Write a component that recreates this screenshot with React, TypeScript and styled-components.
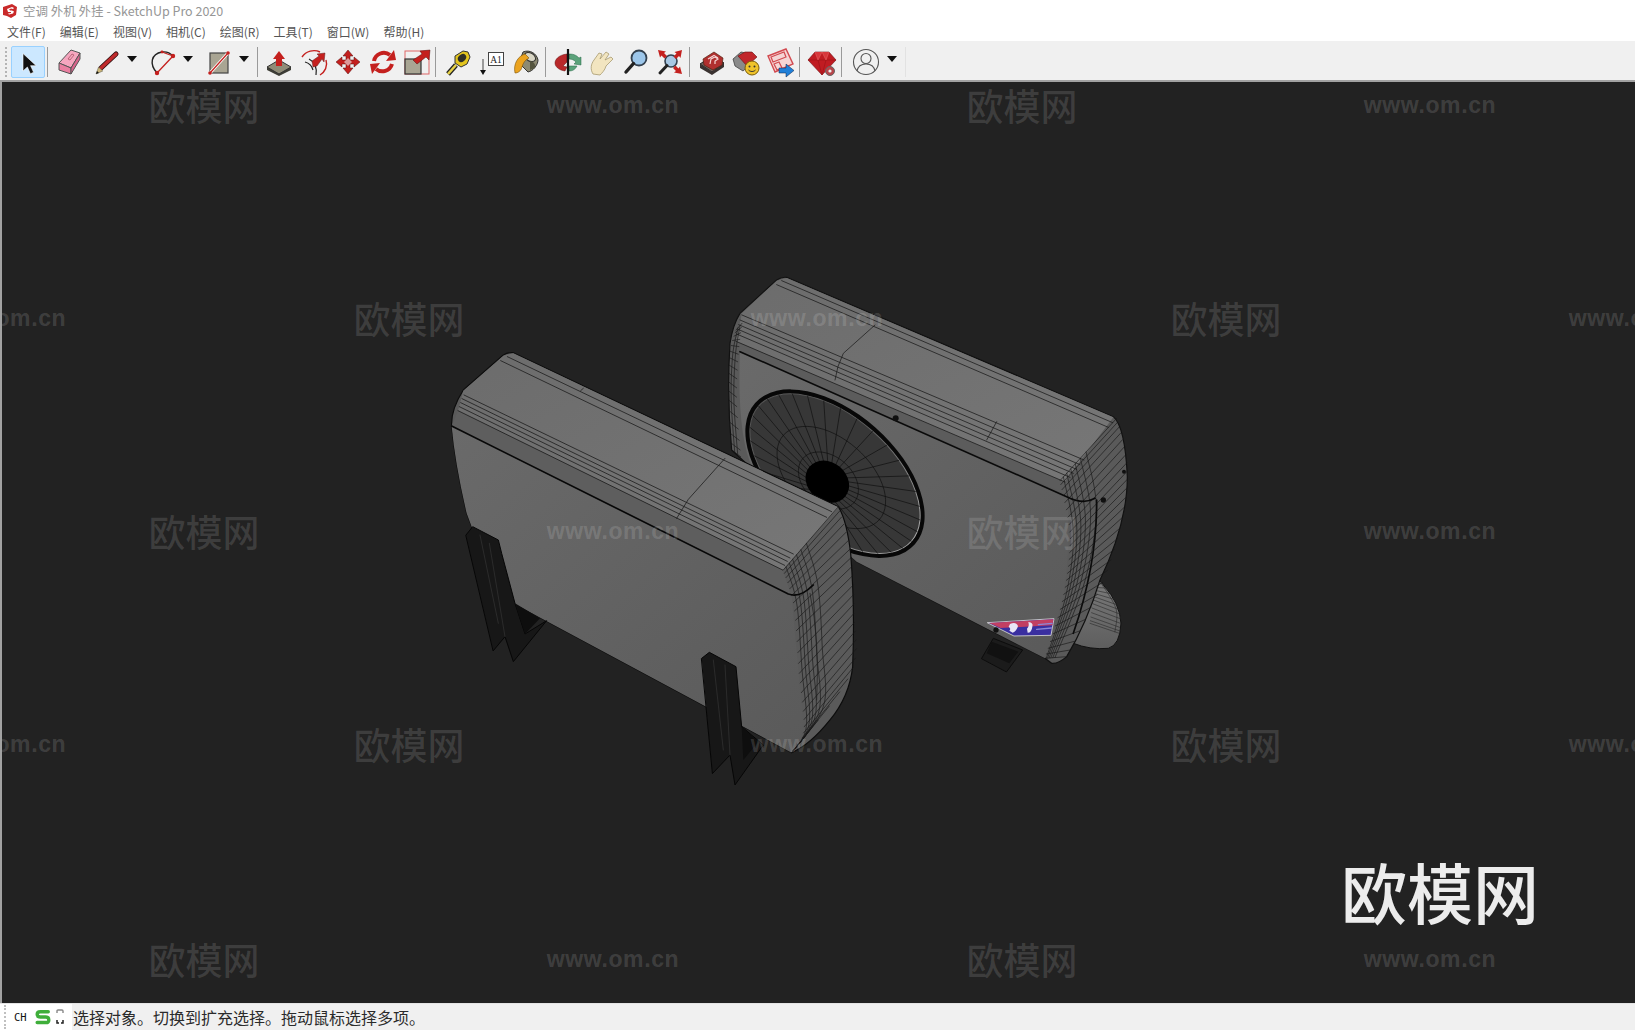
import React from "react";
import styled, { createGlobalStyle } from "styled-components";

type P = [number, number];

const Global = createGlobalStyle`
  html, body { margin: 0; padding: 0; background: #fff; overflow: hidden; }
  * { box-sizing: border-box; }
`;

const CJK = `"Noto Sans CJK SC", "Noto Sans", sans-serif`;

const Page = styled.div`
  width: 1635px;
  height: 1030px;
  display: flex;
  flex-direction: column;
  font-family: ${CJK};
`;
const TitleBar = styled.div`
  height: 21px;
  display: flex;
  align-items: center;
  gap: 5px;
  padding-left: 2px;
  background: #fff;
  color: #969696;
  font-size: 12.5px;
  white-space: pre;
`;
const MenuBar = styled.div`
  height: 20px;
  display: flex;
  align-items: center;
  gap: 14px;
  padding-left: 7px;
  background: #fff;
  color: #555;
  font-size: 12px;
`;
const MenuItem = styled.span`
  white-space: nowrap;
`;
const Toolbar = styled.div`
  height: 41px;
  display: flex;
  align-items: center;
  padding: 3px 0 1px 5px;
  background: #f0f0f0;
  border-bottom: 2px solid #a2a2a2;
`;
const Gripper = styled.div`
  width: 2px;
  height: 30px;
  margin-right: 4px;
  border-left: 2px dotted #b4b4b4;
`;
const Tool = styled.div<{ $w?: number; $active?: boolean }>`
  width: ${(p) => p.$w ?? 34}px;
  height: 32px;
  flex: none;
  display: flex;
  align-items: center;
  justify-content: center;
  border: 1px solid ${(p) => (p.$active ? "#99d1ff" : "transparent")};
  border-radius: 2px;
  background: ${(p) => (p.$active ? "#cce8ff" : "transparent")};
`;
const ToolGap = styled.div`
  width: 3px;
  flex: none;
`;
const Caret = styled.div`
  width: 22px;
  height: 32px;
  flex: none;
  display: flex;
  align-items: center;
  padding-right: 4px;
  padding-bottom: 5px;
  justify-content: center;
  &::before {
    content: "";
    border-left: 5.5px solid transparent;
    border-right: 5.5px solid transparent;
    border-top: 6px solid #111;
  }
`;
const Sep = styled.div<{ $l: number; $r: number; $faint?: boolean }>`
  width: 1px;
  height: 30px;
  flex: none;
  margin: 0 ${(p) => p.$r}px 0 ${(p) => p.$l}px;
  background: ${(p) => (p.$faint ? "#e2e2e2" : "#9a9a9a")};
`;
const Viewport = styled.div`
  flex: 1;
  position: relative;
  overflow: hidden;
  background: #222222;
  border-left: 2px solid #a2a2a2;
`;
const ModelSvg = styled.svg`
  position: absolute;
  left: 0;
  top: 0;
  width: 1633px;
  height: 921px;
`;
const MarkCn = styled.span<{ $x: number; $y: number }>`
  position: absolute;
  left: ${(p) => p.$x - 2}px;
  top: ${(p) => p.$y - 83.5}px;
  transform: translate(-50%, -50%);
  font-size: 37px;
  line-height: 1.1;
  font-weight: 500;
  color: rgba(255, 255, 255, 0.13);
  white-space: nowrap;
`;
const MarkUrl = styled.span<{ $x: number; $y: number }>`
  position: absolute;
  left: ${(p) => p.$x - 2}px;
  top: ${(p) => p.$y - 82}px;
  transform: translate(-50%, -50%);
  font-family: "Liberation Sans", Arial, sans-serif;
  font-size: 23px;
  line-height: 1.2;
  font-weight: 700;
  letter-spacing: 0.6px;
  color: rgba(255, 255, 255, 0.14);
  white-space: nowrap;
`;
const BigLogo = styled.span`
  position: absolute;
  left: 1339px;
  top: 768px;
  font-size: 66px;
  line-height: 80px;
  font-weight: 500;
  color: #ececec;
  white-space: nowrap;
`;
const StatusBar = styled.div`
  height: 27px;
  display: flex;
  align-items: center;
  background: #f0f0f0;
  border-top: 1px solid #e4e4e4;
  color: #2b2b2b;
  font-size: 16px;
`;
const Tray = styled.div`
  width: 72px;
  height: 100%;
  display: flex;
  align-items: center;
  padding-left: 4px;
  background: #fff;
`;
const TrayGrip = styled.div`
  width: 2px;
  height: 24px;
  margin-right: 8px;
  border-left: 2px dotted #c0c0c0;
`;
const TrayCode = styled.span`
  font-family: "DejaVu Sans Mono", "Liberation Mono", monospace;
  font-size: 10.5px;
  color: #111;
  margin-right: 7px;
`;
const StatusText = styled.span`
  margin-left: 1px;
  white-space: nowrap;
`;
const CornerSvg = styled.svg`
  margin-left: 3px;
`;

/* ---------- model geometry helpers ---------- */
function curve(pts: P[], n: number): P[] {
  const out: P[] = [];
  const seg = pts.length - 1;
  for (let i = 0; i <= n; i++) {
    const t = (i / n) * seg;
    const k = Math.min(Math.floor(t), seg - 1);
    const f = t - k;
    const p0 = pts[Math.max(k - 1, 0)];
    const p1 = pts[k];
    const p2 = pts[k + 1];
    const p3 = pts[Math.min(k + 2, seg)];
    const c = (a: number, b: number, c2: number, d: number) =>
      0.5 * (2 * b + (c2 - a) * f + (2 * a - 5 * b + 4 * c2 - d) * f * f + (3 * b - a - 3 * c2 + d) * f * f * f);
    out.push([c(p0[0], p1[0], p2[0], p3[0]), c(p0[1], p1[1], p2[1], p3[1])]);
  }
  return out;
}
const poly = (a: P[]) => "M" + a.map((p) => `${p[0].toFixed(1)},${p[1].toFixed(1)}`).join(" L");

function mesh(inner: P[], outer: P[], rows: number, us: number[]): string[] {
  const L = curve(inner, rows);
  const R = curve(outer, rows);
  const d: string[] = [];
  for (let i = 0; i <= rows; i++) d.push(poly([L[i], R[i]]));
  us.forEach((u) => {
    d.push(poly(L.map((p, i) => [p[0] + (R[i][0] - p[0]) * u, p[1] + (R[i][1] - p[1]) * u] as P)));
  });
  return d;
}

function ellipsePt(cx: number, cy: number, a: number, b: number, rotDeg: number, t: number): P {
  const r = (rotDeg * Math.PI) / 180;
  const x = a * Math.cos(t);
  const y = b * Math.sin(t);
  return [cx + x * Math.cos(r) - y * Math.sin(r), cy + x * Math.sin(r) + y * Math.cos(r)];
}

function fanPaths() {
  const rim = (t: number) => ellipsePt(345, 611, 306, 170, 41.5, t);
  const hub = (t: number) => ellipsePt(322, 635, 68, 56, 40, t);
  const spokes: string[] = [];
  for (let k = 0; k < 32; k++) {
    const t = (k / 32) * Math.PI * 2;
    spokes.push(poly([hub(t), rim(t)]));
  }
  const rings = [0.14, 0.52].map((u) => {
    const pts: P[] = [];
    for (let k = 0; k <= 60; k++) {
      const t = (k / 60) * Math.PI * 2;
      const a = hub(t);
      const b = rim(t);
      pts.push([a[0] + (b[0] - a[0]) * u, a[1] + (b[1] - a[1]) * u]);
    }
    return poly(pts);
  });
  return [...spokes, ...rings];
}

const aLines: [number, number, number, number][] = [
  [232, 50, 1205, 515],
  [212, 62, 1190, 532],
  [102, 165, 1090, 642],
  [96, 176, 1080, 654],
  [92, 188, 1072, 664],
  [88, 200, 1064, 676],
  [84, 212, 1058, 690],
];
const bLines: [number, number, number, number][] = [
  [185, 32, 1178, 458],
  [170, 44, 1165, 472],
  [66, 135, 1092, 570],
  [60, 150, 1080, 584],
  [56, 164, 1070, 598],
  [54, 178, 1060, 610],
  [50, 192, 1050, 622],
  [48, 214, 1035, 636],
];

const aSide = mesh(
  [[1060, 690], [1092, 800], [1108, 1000], [1122, 1170], [1085, 1238]],
  [[1225, 500], [1262, 640], [1272, 820], [1262, 1000], [1085, 1238]],
  26,
  [0.05, 0.11, 0.17, 0.24, 0.32, 0.42]
);
const bSide = mesh(
  [[1020, 632], [1050, 800], [1030, 980], [975, 1165]],
  [[1190, 445], [1222, 620], [1170, 880], [1040, 1160]],
  26,
  [0.06, 0.12, 0.19, 0.27, 0.36, 0.46]
);
const bLeft = mesh(
  [[66, 160], [54, 260], [50, 400], [62, 560]],
  [[48, 180], [30, 250], [25, 380], [35, 540]],
  16,
  [0.33, 0.66]
);
const lump = mesh(
  [[1125, 940], [1120, 990], [1110, 1060]],
  [[1140, 930], [1200, 1020], [1198, 1090]],
  12,
  [0.85]
);
const fan = fanPaths();

const Model = () => (
  <ModelSvg viewBox="2 82 1633 921">
    <defs>
      <linearGradient id="topA" x1="0" y1="0" x2="1" y2="1">
        <stop offset="0" stopColor="#6c6c6c" />
        <stop offset="1" stopColor="#777" />
      </linearGradient>
      <linearGradient id="frontA" x1="0" y1="0" x2="1" y2="1">
        <stop offset="0" stopColor="#6a6a6a" />
        <stop offset="1" stopColor="#5a5a5a" />
      </linearGradient>
      <linearGradient id="lump" x1="0" y1="0" x2="0" y2="1">
        <stop offset="0" stopColor="#7a7a7a" />
        <stop offset="1" stopColor="#5e5e5e" />
      </linearGradient>
      <linearGradient id="rimLight" x1="0" y1="0" x2="1" y2="0">
        <stop offset="0" stopColor="#555" />
        <stop offset="0.55" stopColor="#666" />
        <stop offset="1" stopColor="#a8a8a8" />
      </linearGradient>
    </defs>

    {/* right unit */}
    <g transform="translate(720,270) scale(0.33333)" strokeLinejoin="round" strokeLinecap="round">
      <path d="M785,1165 L820,1105 L908,1140 L860,1205 Z" fill="#1b1b1b" stroke="#0c0c0c" strokeWidth="3" />
      <path d="M815,1115 L895,1145 L868,1180 L800,1150 Z" fill="#111" />
      <path
        d="M1125,935 Q1140,925 1150,945 Q1200,1000 1203,1060 Q1200,1125 1165,1135 Q1110,1140 1060,1120 Z"
        fill="url(#lump)"
        stroke="#111"
        strokeWidth="3"
      />
      <path d={lump.join(" ")} fill="none" stroke="#222" strokeWidth="1.6" />
      <path
        d="M200,22 L1180,440 Q1215,470 1222,620 Q1222,760 1140,930 Q1100,1060 1040,1160 Q1015,1182 995,1180 L975,1165 L410,875 L100,600 L35,540 Q20,380 30,220 Q38,165 60,130 L170,30 Q185,20 200,22 Z"
        fill="#5a5a5a"
        stroke="#111"
        strokeWidth="3.5"
      />
      <path d="M200,24 L1180,442 L1030,640 L48,214 L66,130 L170,32 Z" fill="url(#topA)" />
      <path d="M48,214 L1035,636 L1090,695 L60,245 Z" fill="#5c5c5c" />
      <path d="M60,245 L1040,678 Q1055,800 1030,980 L975,1165 L410,875 L100,600 Q50,500 60,245 Z" fill="url(#frontA)" />
      {bLines.map((l, i) => (
        <line key={i} x1={l[0]} y1={l[1]} x2={l[2]} y2={l[3]} stroke="#161616" strokeWidth="2.2" />
      ))}
      <path d="M465,165 L370,250 Q350,290 345,330 M830,455 L800,510" fill="none" stroke="#1a1a1a" strokeWidth="2.2" />
      <path d={bSide.join(" ")} fill="none" stroke="#161616" strokeWidth="1.9" />
      <path d={bLeft.join(" ")} fill="none" stroke="#161616" strokeWidth="1.9" />
      <path d="M60,245 L1040,680 Q1090,705 1125,685" fill="none" stroke="#0a0a0a" strokeWidth="5" />
      <path d="M1130,690 Q1132,880 1060,1090" fill="none" stroke="#0c0c0c" strokeWidth="5" />
      {/* fan */}
      <g transform="rotate(41.5 345 611)">
        <ellipse cx="345" cy="611" rx="320" ry="184" fill="#070707" />
        <ellipse cx="345" cy="611" rx="306" ry="170" fill="#373737" stroke="url(#rimLight)" strokeWidth="3" />
      </g>
      <path d={fan.join(" ")} fill="none" stroke="#0e0e0e" strokeWidth="2" />
      <ellipse cx="322" cy="635" rx="70" ry="58" transform="rotate(40 322 635)" fill="#000" />
      <circle cx="527" cy="445" r="9" fill="#101010" />
      <circle cx="1150" cy="690" r="8" fill="#101010" />
      <circle cx="1212" cy="605" r="6" fill="#101010" />
      {/* badge */}
      <path d="M803,1058 L1002,1046 L993,1096 L883,1098 Z" fill="#3a2fa0" stroke="#d8d8d8" strokeWidth="2.5" />
      <path d="M808,1059 L1000,1048 L997,1066 L842,1074 Z" fill="#c23f62" />
      <path d="M870,1062 q18,-8 24,6 q-4,16 -16,20 l-10,-6 q6,-6 -2,-12 Z" fill="#e8e6f6" />
      <path d="M925,1056 q16,2 12,14 q-2,18 -14,18 l-2,-12 q8,-8 4,-20 Z" fill="#e8e6f6" />
      <path d="M955,1064 L996,1060 M950,1078 L994,1074" stroke="#8c88d8" strokeWidth="4" />
      <circle cx="828" cy="1080" r="8" fill="#111" />
    </g>

    {/* left unit */}
    <g transform="translate(430,340) scale(0.33333)" strokeLinejoin="round" strokeLinecap="round">
      <path
        d="M250,38 L1225,500 Q1250,540 1262,640 Q1275,800 1268,980 Q1258,1070 1200,1140 Q1140,1215 1085,1238 L250,790 L125,560 L110,520 Q75,370 65,258 Q62,210 100,150 L220,45 Q235,36 250,38 Z"
        fill="#5a5a5a"
        stroke="#0c0c0c"
        strokeWidth="3.5"
      />
      <path d="M250,40 L1225,502 L1058,690 L84,212 L100,152 L220,47 Z" fill="url(#topA)" />
      <path d="M84,212 L1058,690 L1085,768 L65,258 Z" fill="#5e5e5e" />
      <path d="M65,258 L1085,768 Q1105,1000 1122,1170 L1085,1238 L250,790 L125,560 L110,520 Q75,370 65,258 Z" fill="url(#frontA)" />
      {aLines.map((l, i) => (
        <line key={i} x1={l[0]} y1={l[1]} x2={l[2]} y2={l[3]} stroke="#141414" strokeWidth="2.2" />
      ))}
      <path d="M885,355 L775,478 L740,535 M460,145 L452,152" fill="none" stroke="#161616" strokeWidth="2.2" />
      <path d={aSide.join(" ")} fill="none" stroke="#161616" strokeWidth="1.9" />
      <path d="M65,258 L1075,762 Q1110,775 1150,735" fill="none" stroke="#080808" strokeWidth="5" />
      <path d="M1140,760 Q1170,900 1160,1080" fill="none" stroke="#1a1a1a" strokeWidth="2" />

      {/* legs */}
      <path
        d="M108,585 L128,560 L205,600 L215,640 L255,790 L285,882 L350,842 L250,965 L225,890 L190,932 Z"
        fill="#171717"
        stroke="#060606"
        strokeWidth="3"
      />
      <path d="M150,585 L205,850 M178,610 L225,890" stroke="#2b2b2b" strokeWidth="3" fill="none" />
      <path d="M255,790 L330,835 L285,882 Z" fill="#0e0e0e" />
      <path
        d="M815,955 L838,937 L918,980 L935,1160 L1000,1215 L915,1335 L900,1245 L848,1300 Z"
        fill="#171717"
        stroke="#060606"
        strokeWidth="3"
      />
      <path d="M850,960 L880,1230 M885,975 L900,1245" stroke="#2b2b2b" strokeWidth="3" fill="none" />
      <path d="M935,1160 L985,1205 L940,1260 Z" fill="#0e0e0e" />
    </g>
  </ModelSvg>
);

/* ---------- toolbar icons ---------- */
const S = 30;
const Ico = styled.svg.attrs({ viewBox: "0 0 30 30", width: S, height: S })`
  display: block;
  flex: none;
  overflow: visible;
`;
const RED = "#c4201e";
const ArrowSelect = () => (
  <Ico><path d="M10 6.500V24l4.400-4 3 6.800 3.200-1.500-3-6.600h5.600z" fill="#111" stroke="#fff" strokeWidth=".6" /></Ico>
);
const Eraser = () => (
  <Ico>
    <path d="M5 16 17 3l9 3-9 15z" fill="#f6a6bf" stroke="#555" />
    <path d="M5 16l12 5v6L5 23z" fill="#ea7fa1" stroke="#555" />
    <path d="M17 21 26 6v6l-9 15z" fill="#d9648c" stroke="#555" />
    <path d="M14 12l4-5 2 1-4 5z" fill="none" stroke="#a56" strokeWidth=".8" />
  </Ico>
);
const Pencil = () => (
  <Ico>
    <path d="M25 7 10 21" stroke="#2a1010" strokeWidth="5" strokeLinecap="round" />
    <path d="M25 7 10 21" stroke="#bf2a2c" strokeWidth="3.400" strokeLinecap="round" />
    <path d="M5 27l2.600-7 4.200 4z" fill="#cdb678" stroke="#554" strokeWidth=".5" />
    <path d="M5 27l1-3 2 2z" fill="#111" />
  </Ico>
);
const ArcTool = () => (
  <Ico>
    <path d="M10 26C2 17 4 7 15 5c4-.6 8 .8 11 4" fill="none" stroke="#222" strokeWidth="1.400" />
    <path d="M10 26 26 9M15 5l11 4" fill="none" stroke={RED} strokeWidth="1.300" />
    <circle cx="10" cy="26" r="2.200" fill={RED} />
    <circle cx="26" cy="9" r="2.200" fill={RED} />
    <circle cx="15" cy="5" r="1.400" fill={RED} />
  </Ico>
);
const RectTool = () => (
  <Ico>
    <rect x="7" y="6" width="18" height="20" fill="#a9a593" stroke="#444" strokeWidth="1.200" />
    <path d="M7 26 25 6" stroke="#fff" strokeWidth="3" />
    <path d="M7 26 25 6" stroke={RED} strokeWidth="1.200" />
    <circle cx="7" cy="26" r="1.800" fill={RED} />
    <circle cx="25" cy="6" r="1.800" fill={RED} />
  </Ico>
);
const PushPull = () => (
  <Ico>
    <path d="M3 20v3l12 6 12-6v-3z" fill="#3e3e36" />
    <path d="M3 20 15 13l12 7-12 7z" fill="#8f8c78" stroke="#333" />
    <path d="M15 4l6 8h-3v7h-6v-7H9z" fill={RED} />
  </Ico>
);
const FollowMe = () => (
  <Ico>
    <path d="M3 10C7 4 15 2 21 5" fill="none" stroke={RED} strokeWidth="1.400" />
    <path d="M27 13c2 6-1 12-6 15" fill="none" stroke={RED} strokeWidth="1.400" />
    <path d="M10 12c6 3 8 9 7 16M6 15c4 1 7 4 8 8" fill="none" stroke="#222" strokeWidth="1.200" />
    <path d="M14 20l-1-6 7-5-2-2 8-1-1 9-2-3-5 7z" fill={RED} stroke="#622" strokeWidth=".5" />
  </Ico>
);
const MoveTool = () => (
  <Ico>
    <path d="M15 3l5 6h-3v4h4v-3l6 5-6 5v-3h-4v4h3l-5 6-5-6h3v-4H9v3l-6-5 6-5v3h4V9h-3z" fill={RED} stroke="#511" strokeWidth=".5" />
    <path d="M15 11l4 4-4 4-4-4z" fill="#eee" opacity=".6" />
  </Ico>
);
const RotateTool = () => (
  <Ico>
    <path d="M6 14A10 10 0 0 1 22 8" fill="none" stroke={RED} strokeWidth="4" />
    <path d="M18 14 28 13l-2-10z" fill={RED} />
    <path d="M24 17A10 10 0 0 1 8 22" fill="none" stroke={RED} strokeWidth="4" />
    <path d="M12 16 2 17l2 10z" fill={RED} />
  </Ico>
);
const ScaleTool = () => (
  <Ico>
    <rect x="3" y="4" width="24" height="23" fill="none" stroke="#d66" strokeWidth="1" />
    <rect x="3" y="12" width="16" height="15" fill="#a9a593" stroke="#333" strokeWidth="1.200" />
    <path d="M11 13 20 7l-2-3 10-1-1 10-3-3-9 7z" fill={RED} stroke="#511" strokeWidth=".5" />
  </Ico>
);
const Tape = () => (
  <Ico>
    <path d="M13 18 5 27" stroke="#222" strokeWidth="5" />
    <path d="M13 18 5 27" stroke="#e6d24a" strokeWidth="2.600" />
    <path d="M12 9 20 4l5 1 2 5-3 7-6 3-6-4z" fill="#e3c51e" stroke="#333" />
    <ellipse cx="19" cy="11" rx="4.500" ry="3.500" transform="rotate(-40 19 11)" fill="#2f2f26" />
  </Ico>
);
const TextTool = () => (
  <Ico>
    <rect x="11.500" y="5.500" width="15" height="13" fill="#fff" stroke="#444" />
    <text x="19" y="15.500" fontFamily="'Liberation Serif', serif" fontSize="9.500" textAnchor="middle" fill="#222">A1</text>
    <path d="M6 12v14" stroke="#444" />
    <path d="M3 23h6l-3 5z" fill="#111" />
  </Ico>
);
const Paint = () => (
  <Ico>
    <path d="M12 5c7-3 14 2 15 8 0 5-5 11-10 12L8 16z" fill="#8d8a72" stroke="#333" />
    <ellipse cx="19" cy="10" rx="6" ry="4" transform="rotate(30 19 10)" fill="#d8d5c4" stroke="#333" />
    <path d="M14 7C7 9 2 17 4 26c3 0 6-2 7-6 1-4 3-7 7-9z" fill="#eba31f" stroke="#7a5308" strokeWidth=".6" />
    <path d="M19 14c3 0 6 3 5 7l-5 2z" fill="#55553f" />
  </Ico>
);
const Orbit = () => (
  <Ico>
    <path d="M14 7C5 8 2 13 2 16s3 7 10 8l2-4-4-1 4-4z" fill="#b8282a" stroke="#611" strokeWidth=".5" />
    <path d="M16 7c5 0 7 1 10 4l2-1v8l-7-1 2-2c-2-2-4-3-7-3zM16 19l8 0c-2 4-5 5-8 5z" fill="#5ba27a" stroke="#264" strokeWidth=".5" />
    <path d="M15 2v26" stroke="#111" strokeWidth="2.200" />
  </Ico>
);
const Hand = () => (
  <Ico>
    <path d="M6 27c-3-5-2-10 1-14l5-7 3 1-2 5 6-7 3 2-4 6 6-3 2 2-7 7c-1 4-4 7-6 9z" fill="#f2e5c0" stroke="#a89a70" strokeWidth=".8" />
  </Ico>
);
const ZoomTool = () => (
  <Ico>
    <circle cx="18" cy="11" r="7.500" fill="#9cc6ea" stroke="#33404e" strokeWidth="1.800" />
    <path d="M12.500 16.500 5 25" stroke="#222" strokeWidth="3.400" strokeLinecap="round" />
  </Ico>
);
const Extents = () => (
  <Ico>
    <circle cx="16" cy="14" r="6" fill="#a8c8e4" stroke="#33404e" strokeWidth="1.600" />
    <path d="M12 18.500 5 26" stroke="#222" strokeWidth="3" strokeLinecap="round" />
    <path d="M3 3l8 1.500-2 1.500 3 3-2.500 2.500-3-3L5 10.500zM27 3l-1.500 8-1.500-2-3 3-2.500-2.500 3-3-2-1.500zM27 27l-8-1.500 2-1.500-3-3 2.500-2.500 3 3 1.500-2z" fill={RED} />
  </Ico>
);
const Warehouse = () => (
  <Ico>
    <path d="M3 17 15 9l12 7-12 9z" fill="#6d5f5a" stroke="#222" />
    <path d="M3 17v4l12 7 12-8v-4l-12 9z" fill="#3a3230" />
    <path d="M6 12 17 5l9 6-1 7-9 5-9-5z" fill="#b0302f" stroke="#521" strokeWidth=".7" />
    <path d="M11 12l6-3.500 4 2.500M13 17l1-5 4-2 3 2-3 2v3" fill="none" stroke="#f4d4d4" strokeWidth="1.200" />
  </Ico>
);
const ExtWarehouse = () => (
  <Ico>
    <path d="M2 12 10 5l10 2 1 9-9 8-8-5z" fill="#8a8a8a" stroke="#333" strokeWidth=".7" />
    <path d="M7 9l7-4h7l5 5-10 9z" fill="#c1262b" stroke="#611" strokeWidth=".6" />
    <circle cx="21" cy="21" r="7" fill="#efc32b" stroke="#7a5d08" />
    <circle cx="18.500" cy="19.500" r="1" fill="#333" />
    <circle cx="23.500" cy="19.500" r="1" fill="#333" />
    <path d="M17.500 23c2 2 5 2 7 0" stroke="#333" fill="none" />
  </Ico>
);
const LayoutTool = () => (
  <Ico>
    <path d="M3 9 21 2l7 15-18 8z" fill="#f5d5d5" stroke="#d24a50" strokeWidth="1.400" />
    <path d="M6 10l13-5 2 5-13 5zM9 17l5-2 3 6-5 2z" fill="none" stroke="#d24a50" strokeWidth="1.200" />
    <path d="M14 21h7v-4l8 6.500-8 6.500v-4h-7z" fill="#1f7fd8" stroke="#124" strokeWidth=".5" />
  </Ico>
);
const Ruby = () => (
  <Ico>
    <path d="M8 5h14l7 8-14 15L1 13z" fill="#c01c22" stroke="#6d0f12" strokeWidth=".6" />
    <path d="M1 13h28M11 13l4 15 4-15" fill="none" stroke="#a01418" strokeWidth=".7" />
    <path d="M8 5l3 8 4-8 4 8 3-8" fill="#d8383c" stroke="#e86a6a" strokeWidth=".5" />
    <circle cx="23" cy="24" r="4.500" fill="#b8454a" stroke="#666" />
    <circle cx="23" cy="24" r="1.600" fill="#eee" />
  </Ico>
);
const User = () => (
  <Ico>
    <circle cx="15" cy="15" r="12.500" fill="none" stroke="#555" strokeWidth="1.100" />
    <circle cx="15" cy="11.500" r="5" fill="none" stroke="#555" strokeWidth="1.100" />
    <path d="M6 24c1-5 5-7 9-7s8 2 9 7" fill="none" stroke="#555" strokeWidth="1.100" />
  </Ico>
);

const Logo = () => (
  <svg width="16" height="16" viewBox="0 0 16 16">
    <path d="M1 4 10 1l5 3-1 8-5 3-4-2-4-1z" fill="#c92a2a" />
    <path d="M5 6l5-2 2 1-1 1-2-.5-2 1 1 1 2 0 2 1-1 2-4 1-1-1 3-.5 0-1-3 0z" fill="#fff" />
  </svg>
);
const SogouS = () => (
  <svg width="18" height="18" viewBox="0 0 17 17">
    <path d="M13.500 3.500H6Q3 3.500 3 6t3 2.500h5q3 0 3 2.800t-3 2.400H3" fill="none" stroke="#3fae3a" strokeWidth="3.200" strokeLinecap="round" strokeLinejoin="round" />
  </svg>
);
const CornerBox = () => (
  <CornerSvg width="10" height="18" viewBox="0 0 10 18">
    <path d="M2 5V3q0-1 1-1h4q1 0 1 1v2" fill="none" stroke="#888" strokeWidth="1.400" />
    <path d="M2 12v3h2M8 12v3H6" fill="none" stroke="#222" strokeWidth="1.500" />
  </CornerSvg>
);

const menus = ["文件(F)", "编辑(E)", "视图(V)", "相机(C)", "绘图(R)", "工具(T)", "窗口(W)", "帮助(H)"];

const rows = [106, 319, 532, 745, 960];
const marks = rows.flatMap((y, i) =>
  i % 2 === 0
    ? [
        { kind: "cn", x: 204, y },
        { kind: "url", x: 613, y },
        { kind: "cn", x: 1022, y },
        { kind: "url", x: 1430, y },
      ]
    : [
        { kind: "url", x: 0, y },
        { kind: "cn", x: 409, y },
        { kind: "url", x: 817, y },
        { kind: "cn", x: 1226, y },
        { kind: "url", x: 1635, y },
      ]
);

export default function App() {
  return (
    <Page>
      <Global />
      <TitleBar>
        <Logo />
        <span>空调 外机 外挂 - SketchUp Pro 2020</span>
      </TitleBar>
      <MenuBar>
        {menus.map((m) => (
          <MenuItem key={m}>{m}</MenuItem>
        ))}
      </MenuBar>
      <Toolbar>
        <Gripper />
        <Tool $active><ArrowSelect /></Tool>
        <Sep $l={2} $r={4} />
        <Tool><Eraser /></Tool>
        <ToolGap />
        <Tool><Pencil /></Tool>
        <Caret />
        <Tool><ArcTool /></Tool>
        <Caret />
        <Tool><RectTool /></Tool>
        <Caret />
        <Sep $l={0} $r={4} />
        <Tool $w={34.5}><PushPull /></Tool>
        <Tool $w={34.5}><FollowMe /></Tool>
        <Tool $w={34.5}><MoveTool /></Tool>
        <Tool $w={34.5}><RotateTool /></Tool>
        <Tool $w={34.5}><ScaleTool /></Tool>
        <Sep $l={0} $r={5} />
        <Tool><Tape /></Tool>
        <Tool><TextTool /></Tool>
        <Tool><Paint /></Tool>
        <Sep $l={2} $r={5} />
        <Tool><Orbit /></Tool>
        <Tool><Hand /></Tool>
        <Tool><ZoomTool /></Tool>
        <Tool><Extents /></Tool>
        <Sep $l={2} $r={5} />
        <Tool><Warehouse /></Tool>
        <Tool><ExtWarehouse /></Tool>
        <Tool><LayoutTool /></Tool>
        <Sep $l={2} $r={5} />
        <Tool><Ruby /></Tool>
        <Sep $l={2} $r={7} />
        <Tool><User /></Tool>
        <Caret />
        <Sep $l={0} $r={0} $faint />
      </Toolbar>
      <Viewport>
        <Model />
        {marks.map((m, i) =>
          m.kind === "cn" ? (
            <MarkCn key={i} $x={m.x} $y={m.y}>欧模网</MarkCn>
          ) : (
            <MarkUrl key={i} $x={m.x} $y={m.y}>www.om.cn</MarkUrl>
          )
        )}
        <BigLogo>欧模网</BigLogo>
      </Viewport>
      <StatusBar>
        <Tray>
          <TrayGrip />
          <TrayCode>CH</TrayCode>
          <SogouS />
          <CornerBox />
        </Tray>
        <StatusText>选择对象。切换到扩充选择。拖动鼠标选择多项。</StatusText>
      </StatusBar>
    </Page>
  );
}
